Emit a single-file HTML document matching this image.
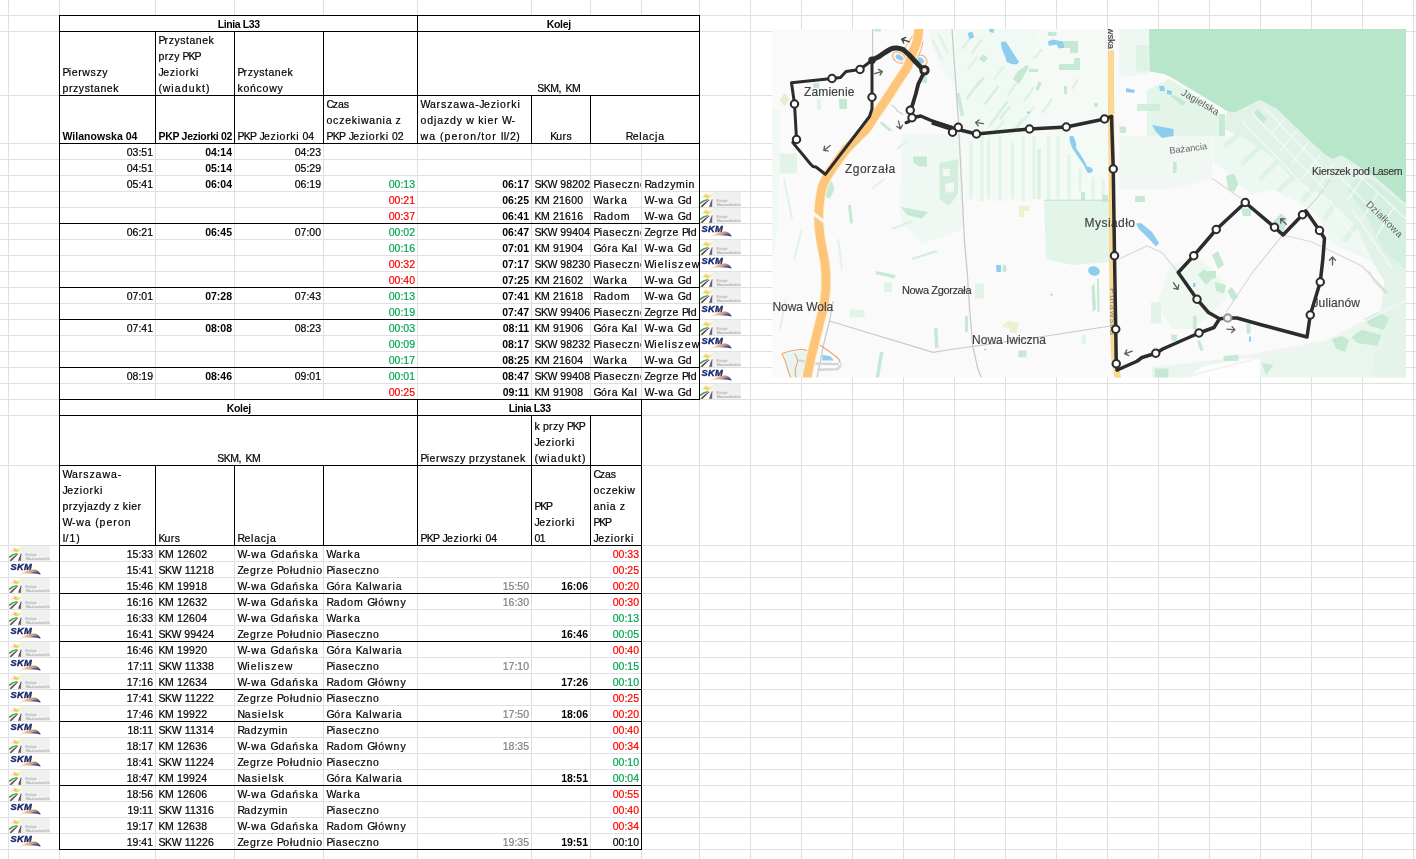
<!DOCTYPE html>
<html lang="pl"><head><meta charset="utf-8"><title>L33</title>
<style>
html,body{margin:0;padding:0;background:#fff}
body{width:1416px;height:859px;position:relative;overflow:hidden;font-family:"Liberation Sans",sans-serif;font-size:10.5px;line-height:16px;color:#000}
i{position:absolute;display:block}
.c{position:absolute;display:flex;align-items:flex-end;white-space:nowrap;box-sizing:border-box;padding:0 2px 0 2.5px}
.c span{display:block;margin-bottom:-1px}
.al{justify-content:flex-start;text-align:left}
.ar{justify-content:flex-end;text-align:right}
.ac{justify-content:center;text-align:center}
.clip{overflow:hidden}
.c{-webkit-text-stroke:0.2px}
.b{font-weight:bold;-webkit-text-stroke:0}
.g{color:#00a651}
.r{color:#f00}
.gr{color:#808080}
u{text-decoration:none;white-space:pre}
.ic{position:absolute}
#map{position:absolute;left:772px;top:29px}
#w{position:absolute;left:0;top:0;width:1416px;height:859px;overflow:hidden;will-change:transform;transform:translateZ(0);background:#fff}
</style></head><body><div id="w">
<svg width="0" height="0" style="position:absolute">
<defs>
<linearGradient id="skg" x1="0" y1="0" x2="1" y2="0"><stop offset="0" stop-color="#fbe3d2"/><stop offset="0.45" stop-color="#f2a868"/><stop offset="0.72" stop-color="#c98a74"/><stop offset="1" stop-color="#26357e"/></linearGradient>
<linearGradient id="skb" x1="0" y1="0" x2="1" y2="0"><stop offset="0" stop-color="#c9cde6" stop-opacity="0.5"/><stop offset="0.5" stop-color="#5b64a3"/><stop offset="1" stop-color="#1d2a72"/></linearGradient>
<symbol id="km" viewBox="0 0 46 15" overflow="visible">
<rect x="12.5" y="0" width="28.5" height="15" fill="#f0f0f0"/>
<rect x="10.5" y="0" width="2" height="15" fill="#f7f7f7"/>
<g fill="#f1d548">
<path d="M6.4,4.6 L5,0.2 L7.2,3.2 Z"/><path d="M6.8,4.4 L13.8,2.2 L8.2,5.6 Z"/><path d="M6,4.8 L9.6,0.8 L8,4.6 Z"/><path d="M6.5,5.2 L11.6,5.4 L7,6.4 Z"/>
<circle cx="6.6" cy="4.6" r="1.5"/>
</g>
<g fill="#efb465"><path d="M6,4.6 L0.8,5.9 L5.4,3.6 Z"/><path d="M6.2,4.2 L2.4,1.8 L6.9,3.4 Z"/></g>
<path d="M-0.2,10.9 Q3,7.9 8.2,7.5 Q4,9 0.6,11.6 Z" fill="#2f9e48" stroke="#2f9e48" stroke-width="0.7" stroke-linejoin="round"/>
<path d="M0.8,14.6 Q5,10 9.2,7.9 Q6,11 2.4,14.7 Z" fill="#4d3f3f" stroke="#4d3f3f" stroke-width="0.5" stroke-linejoin="round"/>
<path d="M9.4,14.6 Q10.6,10.6 12.2,7.5 Q11.8,11 11.8,14.6 Z" fill="#5a5a5a" stroke="#5a5a5a" stroke-width="0.5" stroke-linejoin="round"/>
<g fill="#adadad" font-family="Liberation Sans, sans-serif" font-size="3.3px" font-weight="bold">
<text x="16.6" y="10.3" textLength="11" lengthAdjust="spacingAndGlyphs">Koleje</text>
<text x="16.8" y="14.3" textLength="24" lengthAdjust="spacingAndGlyphs">Mazowieckie</text>
</g>
</symbol>
<symbol id="skm" viewBox="0 0 46 15" overflow="visible">
<text x="1.4" y="7.9" font-family="Liberation Sans, sans-serif" font-weight="bold" font-style="italic" font-size="9.3px" fill="#18266e" stroke="#18266e" stroke-width="0.35" textLength="21.4" lengthAdjust="spacing">SKM</text>
<path d="M10.4,12.7 Q20,6.6 26,7.5 Q30,8.6 31.8,12.5 Q27,9.9 21.5,10.6 Q16,11.3 10.4,12.7 Z" fill="url(#skg)"/>
<path d="M16,11.7 Q22,10 26,10.1 Q29.6,10.5 31.8,12.5 Q28,11.6 24,11.6 Q20,11.5 16,11.7 Z" fill="url(#skb)"/>
</symbol>
</defs>
</svg>

<i style="left:0px;top:15px;width:1416px;height:1px;background:#e0e0e0"></i><i style="left:0px;top:31px;width:1416px;height:1px;background:#e0e0e0"></i><i style="left:0px;top:95px;width:1416px;height:1px;background:#e0e0e0"></i><i style="left:0px;top:143px;width:1416px;height:1px;background:#e0e0e0"></i><i style="left:0px;top:159px;width:1416px;height:1px;background:#e0e0e0"></i><i style="left:0px;top:175px;width:1416px;height:1px;background:#e0e0e0"></i><i style="left:0px;top:191px;width:1416px;height:1px;background:#e0e0e0"></i><i style="left:0px;top:207px;width:1416px;height:1px;background:#e0e0e0"></i><i style="left:0px;top:223px;width:1416px;height:1px;background:#e0e0e0"></i><i style="left:0px;top:239px;width:1416px;height:1px;background:#e0e0e0"></i><i style="left:0px;top:255px;width:1416px;height:1px;background:#e0e0e0"></i><i style="left:0px;top:271px;width:1416px;height:1px;background:#e0e0e0"></i><i style="left:0px;top:287px;width:1416px;height:1px;background:#e0e0e0"></i><i style="left:0px;top:303px;width:1416px;height:1px;background:#e0e0e0"></i><i style="left:0px;top:319px;width:1416px;height:1px;background:#e0e0e0"></i><i style="left:0px;top:335px;width:1416px;height:1px;background:#e0e0e0"></i><i style="left:0px;top:351px;width:1416px;height:1px;background:#e0e0e0"></i><i style="left:0px;top:367px;width:1416px;height:1px;background:#e0e0e0"></i><i style="left:0px;top:383px;width:1416px;height:1px;background:#e0e0e0"></i><i style="left:0px;top:399px;width:1416px;height:1px;background:#e0e0e0"></i><i style="left:0px;top:415px;width:1416px;height:1px;background:#e0e0e0"></i><i style="left:0px;top:465px;width:1416px;height:1px;background:#e0e0e0"></i><i style="left:0px;top:545px;width:1416px;height:1px;background:#e0e0e0"></i><i style="left:0px;top:561px;width:1416px;height:1px;background:#e0e0e0"></i><i style="left:0px;top:577px;width:1416px;height:1px;background:#e0e0e0"></i><i style="left:0px;top:593px;width:1416px;height:1px;background:#e0e0e0"></i><i style="left:0px;top:609px;width:1416px;height:1px;background:#e0e0e0"></i><i style="left:0px;top:625px;width:1416px;height:1px;background:#e0e0e0"></i><i style="left:0px;top:641px;width:1416px;height:1px;background:#e0e0e0"></i><i style="left:0px;top:657px;width:1416px;height:1px;background:#e0e0e0"></i><i style="left:0px;top:673px;width:1416px;height:1px;background:#e0e0e0"></i><i style="left:0px;top:689px;width:1416px;height:1px;background:#e0e0e0"></i><i style="left:0px;top:705px;width:1416px;height:1px;background:#e0e0e0"></i><i style="left:0px;top:721px;width:1416px;height:1px;background:#e0e0e0"></i><i style="left:0px;top:737px;width:1416px;height:1px;background:#e0e0e0"></i><i style="left:0px;top:753px;width:1416px;height:1px;background:#e0e0e0"></i><i style="left:0px;top:769px;width:1416px;height:1px;background:#e0e0e0"></i><i style="left:0px;top:785px;width:1416px;height:1px;background:#e0e0e0"></i><i style="left:0px;top:801px;width:1416px;height:1px;background:#e0e0e0"></i><i style="left:0px;top:817px;width:1416px;height:1px;background:#e0e0e0"></i><i style="left:0px;top:833px;width:1416px;height:1px;background:#e0e0e0"></i><i style="left:0px;top:849px;width:1416px;height:1px;background:#e0e0e0"></i><i style="left:8px;top:0px;width:1px;height:859px;background:#e0e0e0"></i><i style="left:59px;top:0px;width:1px;height:859px;background:#e0e0e0"></i><i style="left:155px;top:0px;width:1px;height:859px;background:#e0e0e0"></i><i style="left:234px;top:0px;width:1px;height:859px;background:#e0e0e0"></i><i style="left:323px;top:0px;width:1px;height:859px;background:#e0e0e0"></i><i style="left:417px;top:0px;width:1px;height:859px;background:#e0e0e0"></i><i style="left:531px;top:0px;width:1px;height:859px;background:#e0e0e0"></i><i style="left:590px;top:0px;width:1px;height:859px;background:#e0e0e0"></i><i style="left:641px;top:0px;width:1px;height:859px;background:#e0e0e0"></i><i style="left:699px;top:0px;width:1px;height:859px;background:#e0e0e0"></i><i style="left:750px;top:0px;width:1px;height:859px;background:#e0e0e0"></i><i style="left:801px;top:0px;width:1px;height:859px;background:#e0e0e0"></i><i style="left:852px;top:0px;width:1px;height:859px;background:#e0e0e0"></i><i style="left:903px;top:0px;width:1px;height:859px;background:#e0e0e0"></i><i style="left:954px;top:0px;width:1px;height:859px;background:#e0e0e0"></i><i style="left:1005px;top:0px;width:1px;height:859px;background:#e0e0e0"></i><i style="left:1056px;top:0px;width:1px;height:859px;background:#e0e0e0"></i><i style="left:1107px;top:0px;width:1px;height:859px;background:#e0e0e0"></i><i style="left:1158px;top:0px;width:1px;height:859px;background:#e0e0e0"></i><i style="left:1209px;top:0px;width:1px;height:859px;background:#e0e0e0"></i><i style="left:1260px;top:0px;width:1px;height:859px;background:#e0e0e0"></i><i style="left:1311px;top:0px;width:1px;height:859px;background:#e0e0e0"></i><i style="left:1362px;top:0px;width:1px;height:859px;background:#e0e0e0"></i><i style="left:1413px;top:0px;width:1px;height:859px;background:#e0e0e0"></i><i style="left:60px;top:16px;width:357px;height:15px;background:#fff"></i><i style="left:418px;top:16px;width:281px;height:15px;background:#fff"></i><i style="left:418px;top:32px;width:281px;height:63px;background:#fff"></i><i style="left:591px;top:96px;width:108px;height:47px;background:#fff"></i><i style="left:60px;top:400px;width:357px;height:15px;background:#fff"></i><i style="left:418px;top:400px;width:223px;height:15px;background:#fff"></i><i style="left:60px;top:416px;width:357px;height:49px;background:#fff"></i><i style="left:59px;top:15px;width:641px;height:1px;background:#000"></i><i style="left:59px;top:31px;width:641px;height:1px;background:#000"></i><i style="left:59px;top:95px;width:641px;height:1px;background:#000"></i><i style="left:59px;top:143px;width:641px;height:1px;background:#000"></i><i style="left:59px;top:223px;width:641px;height:1px;background:#000"></i><i style="left:59px;top:287px;width:641px;height:1px;background:#000"></i><i style="left:59px;top:319px;width:641px;height:1px;background:#000"></i><i style="left:59px;top:367px;width:641px;height:1px;background:#000"></i><i style="left:59px;top:399px;width:641px;height:1px;background:#000"></i><i style="left:59px;top:15px;width:1px;height:385px;background:#000"></i><i style="left:699px;top:15px;width:1px;height:385px;background:#000"></i><i style="left:417px;top:15px;width:1px;height:129px;background:#000"></i><i style="left:155px;top:31px;width:1px;height:113px;background:#000"></i><i style="left:234px;top:31px;width:1px;height:113px;background:#000"></i><i style="left:323px;top:31px;width:1px;height:113px;background:#000"></i><i style="left:531px;top:95px;width:1px;height:49px;background:#000"></i><i style="left:590px;top:95px;width:1px;height:49px;background:#000"></i><i style="left:59px;top:399px;width:583px;height:1px;background:#000"></i><i style="left:59px;top:415px;width:583px;height:1px;background:#000"></i><i style="left:59px;top:465px;width:583px;height:1px;background:#000"></i><i style="left:59px;top:545px;width:583px;height:1px;background:#000"></i><i style="left:59px;top:593px;width:583px;height:1px;background:#000"></i><i style="left:59px;top:641px;width:583px;height:1px;background:#000"></i><i style="left:59px;top:689px;width:583px;height:1px;background:#000"></i><i style="left:59px;top:721px;width:583px;height:1px;background:#000"></i><i style="left:59px;top:785px;width:583px;height:1px;background:#000"></i><i style="left:59px;top:849px;width:583px;height:1px;background:#000"></i><i style="left:59px;top:399px;width:1px;height:451px;background:#000"></i><i style="left:641px;top:399px;width:1px;height:451px;background:#000"></i><i style="left:417px;top:399px;width:1px;height:147px;background:#000"></i><i style="left:531px;top:415px;width:1px;height:131px;background:#000"></i><i style="left:590px;top:415px;width:1px;height:131px;background:#000"></i><i style="left:155px;top:465px;width:1px;height:81px;background:#000"></i><i style="left:234px;top:465px;width:1px;height:81px;background:#000"></i><i style="left:323px;top:465px;width:1px;height:81px;background:#000"></i><div class="c ac b" style="left:60px;top:16px;width:357px;height:15px;"><span><u style="letter-spacing:-0.41px">Linia L33</u></span></div><div class="c ac b" style="left:418px;top:16px;width:281px;height:15px;"><span><u style="letter-spacing:-0.33px">Kolej</u></span></div><div class="c al" style="left:60px;top:32px;width:95px;height:63px;"><span><u style="letter-spacing:-0.80px">P</u><u style="letter-spacing:0.64px">ierwszy</u><br><u style="letter-spacing:0.58px">przystanek</u></span></div><div class="c al" style="left:156px;top:32px;width:78px;height:63px;"><span><u style="letter-spacing:-0.90px">P</u><u style="letter-spacing:0.54px">rzystanek</u><br><u style="letter-spacing:0.35px">przy</u><u style="letter-spacing:-0.09px"> </u><u style="letter-spacing:-1.09px">PKP</u><br><u style="letter-spacing:-0.64px">J</u><u style="letter-spacing:0.80px">eziorki</u><br><u style="letter-spacing:0.67px">(</u><u style="letter-spacing:1.11px">wiadukt</u><u style="letter-spacing:0.67px">)</u></span></div><div class="c al" style="left:235px;top:32px;width:88px;height:63px;"><span><u style="letter-spacing:-0.90px">P</u><u style="letter-spacing:0.54px">rzystanek</u><br><u style="letter-spacing:0.73px">końcowy</u></span></div><div class="c ac" style="left:418px;top:32px;width:281px;height:63px;"><span><u style="letter-spacing:-0.46px">SKM</u><u style="letter-spacing:0.54px">, </u><u style="letter-spacing:-0.46px">KM</u></span></div><div class="c al b" style="left:60px;top:96px;width:95px;height:47px;"><span><u style="letter-spacing:0.03px">Wilanowska 04</u></span></div><div class="c al b" style="left:156px;top:96px;width:78px;height:47px;"><span><u style="letter-spacing:-0.30px">PKP Jeziorki 02</u></span></div><div class="c al" style="left:235px;top:96px;width:88px;height:47px;"><span><u style="letter-spacing:-0.73px">PKP</u><u style="letter-spacing:0.27px"> </u><u style="letter-spacing:-0.73px">J</u><u style="letter-spacing:0.71px">eziorki</u><u style="letter-spacing:0.27px"> </u><u style="letter-spacing:-0.12px">04</u></span></div><div class="c al" style="left:324px;top:96px;width:93px;height:47px;"><span><u style="letter-spacing:-1.40px">C</u><u style="letter-spacing:0.04px">zas</u><br><u style="letter-spacing:0.78px">oczekiwania</u><u style="letter-spacing:0.34px"> </u><u style="letter-spacing:0.78px">z</u><br><u style="letter-spacing:-0.70px">PKP</u><u style="letter-spacing:0.30px"> </u><u style="letter-spacing:-0.70px">J</u><u style="letter-spacing:0.74px">eziorki</u><u style="letter-spacing:0.30px"> </u><u style="letter-spacing:-0.09px">02</u></span></div><div class="c al" style="left:418px;top:96px;width:113px;height:47px;"><span><u style="letter-spacing:-0.54px">W</u><u style="letter-spacing:0.90px">arszawa</u><u style="letter-spacing:0.46px">-</u><u style="letter-spacing:-0.54px">J</u><u style="letter-spacing:0.90px">eziorki</u><br><u style="letter-spacing:0.89px">odjazdy</u><u style="letter-spacing:0.45px"> </u><u style="letter-spacing:0.89px">w</u><u style="letter-spacing:0.45px"> </u><u style="letter-spacing:0.89px">kier</u><u style="letter-spacing:0.45px"> </u><u style="letter-spacing:-0.55px">W</u><u style="letter-spacing:0.45px">-</u><br><u style="letter-spacing:1.23px">wa</u><u style="letter-spacing:0.79px"> (</u><u style="letter-spacing:1.23px">peron</u><u style="letter-spacing:0.79px">/</u><u style="letter-spacing:1.23px">tor</u><u style="letter-spacing:0.79px"> </u><u style="letter-spacing:-0.21px">II</u><u style="letter-spacing:0.79px">/</u><u style="letter-spacing:0.40px">2</u><u style="letter-spacing:0.79px">)</u></span></div><div class="c ac" style="left:532px;top:96px;width:58px;height:47px;"><span><u style="letter-spacing:-0.96px">K</u><u style="letter-spacing:0.48px">urs</u></span></div><div class="c ac" style="left:591px;top:96px;width:108px;height:47px;"><span><u style="letter-spacing:-0.66px">R</u><u style="letter-spacing:0.78px">elacja</u></span></div><div class="c ar" style="left:60px;top:144px;width:95px;height:15px;"><span>03:51</span></div><div class="c ar b" style="left:156px;top:144px;width:78px;height:15px;"><span>04:14</span></div><div class="c ar" style="left:235px;top:144px;width:88px;height:15px;"><span>04:23</span></div><div class="c ar" style="left:60px;top:160px;width:95px;height:15px;"><span>04:51</span></div><div class="c ar b" style="left:156px;top:160px;width:78px;height:15px;"><span>05:14</span></div><div class="c ar" style="left:235px;top:160px;width:88px;height:15px;"><span>05:29</span></div><div class="c ar" style="left:60px;top:176px;width:95px;height:15px;"><span>05:41</span></div><div class="c ar b" style="left:156px;top:176px;width:78px;height:15px;"><span>06:04</span></div><div class="c ar" style="left:235px;top:176px;width:88px;height:15px;"><span>06:19</span></div><div class="c ar g" style="left:324px;top:176px;width:93px;height:15px;"><span>00:13</span></div><div class="c ar b" style="left:418px;top:176px;width:113px;height:15px;"><span>06:17</span></div><div class="c al  clip" style="left:532px;top:176px;width:58px;height:15px;"><span><u style="letter-spacing:-0.50px">SKW</u><u style="letter-spacing:0.50px"> </u><u style="letter-spacing:0.11px">98202</u></span></div><div class="c al  clip" style="left:591px;top:176px;width:50px;height:15px;"><span><u style="letter-spacing:-0.77px">P</u><u style="letter-spacing:0.67px">iaseczno</u></span></div><div class="c al  clip" style="left:642px;top:176px;width:57px;height:15px;"><span><u style="letter-spacing:-0.80px">R</u><u style="letter-spacing:0.64px">adzymin</u></span></div><div class="c ar r" style="left:324px;top:192px;width:93px;height:15px;"><span>00:21</span></div><div class="c ar b" style="left:418px;top:192px;width:113px;height:15px;"><span>06:25</span></div><div class="c al  clip" style="left:532px;top:192px;width:58px;height:15px;"><span><u style="letter-spacing:-0.40px">KM</u><u style="letter-spacing:0.60px"> </u><u style="letter-spacing:0.21px">21600</u></span></div><div class="c al  clip" style="left:591px;top:192px;width:50px;height:15px;"><span><u style="letter-spacing:-0.35px">W</u><u style="letter-spacing:1.09px">arka</u></span></div><div class="c al  clip" style="left:642px;top:192px;width:57px;height:15px;"><span><u style="letter-spacing:-0.27px">W</u><u style="letter-spacing:0.73px">-</u><u style="letter-spacing:1.17px">wa</u><u style="letter-spacing:0.73px"> </u><u style="letter-spacing:-0.27px">G</u><u style="letter-spacing:1.17px">d</u></span></div><div class="c ar r" style="left:324px;top:208px;width:93px;height:15px;"><span>00:37</span></div><div class="c ar b" style="left:418px;top:208px;width:113px;height:15px;"><span>06:41</span></div><div class="c al  clip" style="left:532px;top:208px;width:58px;height:15px;"><span><u style="letter-spacing:-0.40px">KM</u><u style="letter-spacing:0.60px"> </u><u style="letter-spacing:0.21px">21616</u></span></div><div class="c al  clip" style="left:591px;top:208px;width:50px;height:15px;"><span><u style="letter-spacing:-0.55px">R</u><u style="letter-spacing:0.89px">adom</u></span></div><div class="c al  clip" style="left:642px;top:208px;width:57px;height:15px;"><span><u style="letter-spacing:-0.27px">W</u><u style="letter-spacing:0.73px">-</u><u style="letter-spacing:1.17px">wa</u><u style="letter-spacing:0.73px"> </u><u style="letter-spacing:-0.27px">G</u><u style="letter-spacing:1.17px">d</u></span></div><div class="c ar" style="left:60px;top:224px;width:95px;height:15px;"><span>06:21</span></div><div class="c ar b" style="left:156px;top:224px;width:78px;height:15px;"><span>06:45</span></div><div class="c ar" style="left:235px;top:224px;width:88px;height:15px;"><span>07:00</span></div><div class="c ar g" style="left:324px;top:224px;width:93px;height:15px;"><span>00:02</span></div><div class="c ar b" style="left:418px;top:224px;width:113px;height:15px;"><span>06:47</span></div><div class="c al  clip" style="left:532px;top:224px;width:58px;height:15px;"><span><u style="letter-spacing:-0.50px">SKW</u><u style="letter-spacing:0.50px"> </u><u style="letter-spacing:0.11px">99404</u></span></div><div class="c al  clip" style="left:591px;top:224px;width:50px;height:15px;"><span><u style="letter-spacing:-0.77px">P</u><u style="letter-spacing:0.67px">iaseczno</u></span></div><div class="c al  clip" style="left:642px;top:224px;width:57px;height:15px;"><span><u style="letter-spacing:-0.92px">Z</u><u style="letter-spacing:0.52px">egrze</u><u style="letter-spacing:0.08px"> </u><u style="letter-spacing:-0.92px">P</u><u style="letter-spacing:0.52px">łd</u></span></div><div class="c ar g" style="left:324px;top:240px;width:93px;height:15px;"><span>00:16</span></div><div class="c ar b" style="left:418px;top:240px;width:113px;height:15px;"><span>07:01</span></div><div class="c al  clip" style="left:532px;top:240px;width:58px;height:15px;"><span><u style="letter-spacing:-0.40px">KM</u><u style="letter-spacing:0.60px"> </u><u style="letter-spacing:0.21px">91904</u></span></div><div class="c al  clip" style="left:591px;top:240px;width:50px;height:15px;"><span><u style="letter-spacing:-0.71px">G</u><u style="letter-spacing:0.73px">óra</u><u style="letter-spacing:0.29px"> </u><u style="letter-spacing:-0.71px">K</u><u style="letter-spacing:0.73px">al</u></span></div><div class="c al  clip" style="left:642px;top:240px;width:57px;height:15px;"><span><u style="letter-spacing:-0.27px">W</u><u style="letter-spacing:0.73px">-</u><u style="letter-spacing:1.17px">wa</u><u style="letter-spacing:0.73px"> </u><u style="letter-spacing:-0.27px">G</u><u style="letter-spacing:1.17px">d</u></span></div><div class="c ar r" style="left:324px;top:256px;width:93px;height:15px;"><span>00:32</span></div><div class="c ar b" style="left:418px;top:256px;width:113px;height:15px;"><span>07:17</span></div><div class="c al  clip" style="left:532px;top:256px;width:58px;height:15px;"><span><u style="letter-spacing:-0.50px">SKW</u><u style="letter-spacing:0.50px"> </u><u style="letter-spacing:0.11px">98230</u></span></div><div class="c al  clip" style="left:591px;top:256px;width:50px;height:15px;"><span><u style="letter-spacing:-0.77px">P</u><u style="letter-spacing:0.67px">iaseczno</u></span></div><div class="c al  clip" style="left:642px;top:256px;width:57px;height:15px;"><span><u style="letter-spacing:-0.24px">W</u><u style="letter-spacing:1.20px">ieliszew</u></span></div><div class="c ar r" style="left:324px;top:272px;width:93px;height:15px;"><span>00:40</span></div><div class="c ar b" style="left:418px;top:272px;width:113px;height:15px;"><span>07:25</span></div><div class="c al  clip" style="left:532px;top:272px;width:58px;height:15px;"><span><u style="letter-spacing:-0.40px">KM</u><u style="letter-spacing:0.60px"> </u><u style="letter-spacing:0.21px">21602</u></span></div><div class="c al  clip" style="left:591px;top:272px;width:50px;height:15px;"><span><u style="letter-spacing:-0.35px">W</u><u style="letter-spacing:1.09px">arka</u></span></div><div class="c al  clip" style="left:642px;top:272px;width:57px;height:15px;"><span><u style="letter-spacing:-0.27px">W</u><u style="letter-spacing:0.73px">-</u><u style="letter-spacing:1.17px">wa</u><u style="letter-spacing:0.73px"> </u><u style="letter-spacing:-0.27px">G</u><u style="letter-spacing:1.17px">d</u></span></div><div class="c ar" style="left:60px;top:288px;width:95px;height:15px;"><span>07:01</span></div><div class="c ar b" style="left:156px;top:288px;width:78px;height:15px;"><span>07:28</span></div><div class="c ar" style="left:235px;top:288px;width:88px;height:15px;"><span>07:43</span></div><div class="c ar g" style="left:324px;top:288px;width:93px;height:15px;"><span>00:13</span></div><div class="c ar b" style="left:418px;top:288px;width:113px;height:15px;"><span>07:41</span></div><div class="c al  clip" style="left:532px;top:288px;width:58px;height:15px;"><span><u style="letter-spacing:-0.40px">KM</u><u style="letter-spacing:0.60px"> </u><u style="letter-spacing:0.21px">21618</u></span></div><div class="c al  clip" style="left:591px;top:288px;width:50px;height:15px;"><span><u style="letter-spacing:-0.55px">R</u><u style="letter-spacing:0.89px">adom</u></span></div><div class="c al  clip" style="left:642px;top:288px;width:57px;height:15px;"><span><u style="letter-spacing:-0.27px">W</u><u style="letter-spacing:0.73px">-</u><u style="letter-spacing:1.17px">wa</u><u style="letter-spacing:0.73px"> </u><u style="letter-spacing:-0.27px">G</u><u style="letter-spacing:1.17px">d</u></span></div><div class="c ar g" style="left:324px;top:304px;width:93px;height:15px;"><span>00:19</span></div><div class="c ar b" style="left:418px;top:304px;width:113px;height:15px;"><span>07:47</span></div><div class="c al  clip" style="left:532px;top:304px;width:58px;height:15px;"><span><u style="letter-spacing:-0.50px">SKW</u><u style="letter-spacing:0.50px"> </u><u style="letter-spacing:0.11px">99406</u></span></div><div class="c al  clip" style="left:591px;top:304px;width:50px;height:15px;"><span><u style="letter-spacing:-0.77px">P</u><u style="letter-spacing:0.67px">iaseczno</u></span></div><div class="c al  clip" style="left:642px;top:304px;width:57px;height:15px;"><span><u style="letter-spacing:-0.92px">Z</u><u style="letter-spacing:0.52px">egrze</u><u style="letter-spacing:0.08px"> </u><u style="letter-spacing:-0.92px">P</u><u style="letter-spacing:0.52px">łd</u></span></div><div class="c ar" style="left:60px;top:320px;width:95px;height:15px;"><span>07:41</span></div><div class="c ar b" style="left:156px;top:320px;width:78px;height:15px;"><span>08:08</span></div><div class="c ar" style="left:235px;top:320px;width:88px;height:15px;"><span>08:23</span></div><div class="c ar g" style="left:324px;top:320px;width:93px;height:15px;"><span>00:03</span></div><div class="c ar b" style="left:418px;top:320px;width:113px;height:15px;"><span>08:11</span></div><div class="c al  clip" style="left:532px;top:320px;width:58px;height:15px;"><span><u style="letter-spacing:-0.40px">KM</u><u style="letter-spacing:0.60px"> </u><u style="letter-spacing:0.21px">91906</u></span></div><div class="c al  clip" style="left:591px;top:320px;width:50px;height:15px;"><span><u style="letter-spacing:-0.71px">G</u><u style="letter-spacing:0.73px">óra</u><u style="letter-spacing:0.29px"> </u><u style="letter-spacing:-0.71px">K</u><u style="letter-spacing:0.73px">al</u></span></div><div class="c al  clip" style="left:642px;top:320px;width:57px;height:15px;"><span><u style="letter-spacing:-0.27px">W</u><u style="letter-spacing:0.73px">-</u><u style="letter-spacing:1.17px">wa</u><u style="letter-spacing:0.73px"> </u><u style="letter-spacing:-0.27px">G</u><u style="letter-spacing:1.17px">d</u></span></div><div class="c ar g" style="left:324px;top:336px;width:93px;height:15px;"><span>00:09</span></div><div class="c ar b" style="left:418px;top:336px;width:113px;height:15px;"><span>08:17</span></div><div class="c al  clip" style="left:532px;top:336px;width:58px;height:15px;"><span><u style="letter-spacing:-0.50px">SKW</u><u style="letter-spacing:0.50px"> </u><u style="letter-spacing:0.11px">98232</u></span></div><div class="c al  clip" style="left:591px;top:336px;width:50px;height:15px;"><span><u style="letter-spacing:-0.77px">P</u><u style="letter-spacing:0.67px">iaseczno</u></span></div><div class="c al  clip" style="left:642px;top:336px;width:57px;height:15px;"><span><u style="letter-spacing:-0.24px">W</u><u style="letter-spacing:1.20px">ieliszew</u></span></div><div class="c ar g" style="left:324px;top:352px;width:93px;height:15px;"><span>00:17</span></div><div class="c ar b" style="left:418px;top:352px;width:113px;height:15px;"><span>08:25</span></div><div class="c al  clip" style="left:532px;top:352px;width:58px;height:15px;"><span><u style="letter-spacing:-0.40px">KM</u><u style="letter-spacing:0.60px"> </u><u style="letter-spacing:0.21px">21604</u></span></div><div class="c al  clip" style="left:591px;top:352px;width:50px;height:15px;"><span><u style="letter-spacing:-0.35px">W</u><u style="letter-spacing:1.09px">arka</u></span></div><div class="c al  clip" style="left:642px;top:352px;width:57px;height:15px;"><span><u style="letter-spacing:-0.27px">W</u><u style="letter-spacing:0.73px">-</u><u style="letter-spacing:1.17px">wa</u><u style="letter-spacing:0.73px"> </u><u style="letter-spacing:-0.27px">G</u><u style="letter-spacing:1.17px">d</u></span></div><div class="c ar" style="left:60px;top:368px;width:95px;height:15px;"><span>08:19</span></div><div class="c ar b" style="left:156px;top:368px;width:78px;height:15px;"><span>08:46</span></div><div class="c ar" style="left:235px;top:368px;width:88px;height:15px;"><span>09:01</span></div><div class="c ar g" style="left:324px;top:368px;width:93px;height:15px;"><span>00:01</span></div><div class="c ar b" style="left:418px;top:368px;width:113px;height:15px;"><span>08:47</span></div><div class="c al  clip" style="left:532px;top:368px;width:58px;height:15px;"><span><u style="letter-spacing:-0.50px">SKW</u><u style="letter-spacing:0.50px"> </u><u style="letter-spacing:0.11px">99408</u></span></div><div class="c al  clip" style="left:591px;top:368px;width:50px;height:15px;"><span><u style="letter-spacing:-0.77px">P</u><u style="letter-spacing:0.67px">iaseczno</u></span></div><div class="c al  clip" style="left:642px;top:368px;width:57px;height:15px;"><span><u style="letter-spacing:-0.92px">Z</u><u style="letter-spacing:0.52px">egrze</u><u style="letter-spacing:0.08px"> </u><u style="letter-spacing:-0.92px">P</u><u style="letter-spacing:0.52px">łd</u></span></div><div class="c ar r" style="left:324px;top:384px;width:93px;height:15px;"><span>00:25</span></div><div class="c ar b" style="left:418px;top:384px;width:113px;height:15px;"><span>09:11</span></div><div class="c al  clip" style="left:532px;top:384px;width:58px;height:15px;"><span><u style="letter-spacing:-0.40px">KM</u><u style="letter-spacing:0.60px"> </u><u style="letter-spacing:0.21px">91908</u></span></div><div class="c al  clip" style="left:591px;top:384px;width:50px;height:15px;"><span><u style="letter-spacing:-0.71px">G</u><u style="letter-spacing:0.73px">óra</u><u style="letter-spacing:0.29px"> </u><u style="letter-spacing:-0.71px">K</u><u style="letter-spacing:0.73px">al</u></span></div><div class="c al  clip" style="left:642px;top:384px;width:57px;height:15px;"><span><u style="letter-spacing:-0.27px">W</u><u style="letter-spacing:0.73px">-</u><u style="letter-spacing:1.17px">wa</u><u style="letter-spacing:0.73px"> </u><u style="letter-spacing:-0.27px">G</u><u style="letter-spacing:1.17px">d</u></span></div><div class="c ac b" style="left:60px;top:400px;width:357px;height:15px;"><span><u style="letter-spacing:-0.33px">Kolej</u></span></div><div class="c ac b" style="left:418px;top:400px;width:223px;height:15px;"><span><u style="letter-spacing:-0.41px">Linia L33</u></span></div><div class="c ac" style="left:60px;top:416px;width:357px;height:49px;"><span><u style="letter-spacing:-0.46px">SKM</u><u style="letter-spacing:0.54px">, </u><u style="letter-spacing:-0.46px">KM</u></span></div><div class="c al" style="left:418px;top:416px;width:113px;height:49px;"><span><u style="letter-spacing:-0.84px">P</u><u style="letter-spacing:0.60px">ierwszy</u><u style="letter-spacing:0.16px"> </u><u style="letter-spacing:0.60px">przystanek</u></span></div><div class="c al" style="left:532px;top:416px;width:58px;height:49px;"><span><u style="letter-spacing:0.34px">k</u><u style="letter-spacing:-0.10px"> </u><u style="letter-spacing:0.34px">przy</u><u style="letter-spacing:-0.10px"> </u><u style="letter-spacing:-1.10px">PKP</u><br><u style="letter-spacing:-0.64px">J</u><u style="letter-spacing:0.80px">eziorki</u><br><u style="letter-spacing:0.67px">(</u><u style="letter-spacing:1.11px">wiadukt</u><u style="letter-spacing:0.67px">)</u></span></div><div class="c al" style="left:60px;top:466px;width:95px;height:79px;"><span><u style="letter-spacing:-0.48px">W</u><u style="letter-spacing:0.96px">arszawa</u><u style="letter-spacing:0.52px">-</u><br><u style="letter-spacing:-0.64px">J</u><u style="letter-spacing:0.80px">eziorki</u><br><u style="letter-spacing:0.47px">przyjazdy</u><u style="letter-spacing:0.03px"> </u><u style="letter-spacing:0.47px">z</u><u style="letter-spacing:0.03px"> </u><u style="letter-spacing:0.47px">kier</u><br><u style="letter-spacing:-0.36px">W</u><u style="letter-spacing:0.64px">-</u><u style="letter-spacing:1.08px">wa</u><u style="letter-spacing:0.64px"> (</u><u style="letter-spacing:1.08px">peron</u><br><u style="letter-spacing:0.10px">I</u><u style="letter-spacing:1.10px">/</u><u style="letter-spacing:0.71px">1</u><u style="letter-spacing:1.10px">)</u></span></div><div class="c al" style="left:156px;top:466px;width:78px;height:79px;"><span><u style="letter-spacing:-0.96px">K</u><u style="letter-spacing:0.48px">urs</u></span></div><div class="c al" style="left:235px;top:466px;width:88px;height:79px;"><span><u style="letter-spacing:-0.66px">R</u><u style="letter-spacing:0.78px">elacja</u></span></div><div class="c al" style="left:418px;top:466px;width:113px;height:79px;"><span><u style="letter-spacing:-0.73px">PKP</u><u style="letter-spacing:0.27px"> </u><u style="letter-spacing:-0.73px">J</u><u style="letter-spacing:0.71px">eziorki</u><u style="letter-spacing:0.27px"> </u><u style="letter-spacing:-0.12px">04</u></span></div><div class="c al" style="left:532px;top:466px;width:58px;height:79px;"><span><u style="letter-spacing:-1.26px">PKP</u><br><u style="letter-spacing:-0.64px">J</u><u style="letter-spacing:0.80px">eziorki</u><br><u style="letter-spacing:-0.63px">01</u></span></div><div class="c al" style="left:591px;top:466px;width:50px;height:79px;"><span><u style="letter-spacing:-1.40px">C</u><u style="letter-spacing:0.04px">zas</u><br><u style="letter-spacing:0.67px">oczekiw</u><br><u style="letter-spacing:0.77px">ania</u><u style="letter-spacing:0.33px"> </u><u style="letter-spacing:0.77px">z</u><br><u style="letter-spacing:-1.26px">PKP</u><br><u style="letter-spacing:-0.64px">J</u><u style="letter-spacing:0.80px">eziorki</u></span></div><div class="c ar" style="left:60px;top:546px;width:95px;height:15px;"><span>15:33</span></div><div class="c al  clip" style="left:156px;top:546px;width:78px;height:15px;"><span><u style="letter-spacing:-0.40px">KM</u><u style="letter-spacing:0.60px"> </u><u style="letter-spacing:0.21px">12602</u></span></div><div class="c al  clip" style="left:235px;top:546px;width:88px;height:15px;"><span><u style="letter-spacing:-0.32px">W</u><u style="letter-spacing:0.68px">-</u><u style="letter-spacing:1.12px">wa</u><u style="letter-spacing:0.68px"> </u><u style="letter-spacing:-0.32px">G</u><u style="letter-spacing:1.12px">dańska</u></span></div><div class="c al  clip" style="left:324px;top:546px;width:93px;height:15px;"><span><u style="letter-spacing:-0.35px">W</u><u style="letter-spacing:1.09px">arka</u></span></div><div class="c ar r" style="left:591px;top:546px;width:50px;height:15px;"><span>00:33</span></div><div class="c ar" style="left:60px;top:562px;width:95px;height:15px;"><span>15:41</span></div><div class="c al  clip" style="left:156px;top:562px;width:78px;height:15px;"><span><u style="letter-spacing:-0.41px">SKW</u><u style="letter-spacing:0.59px"> </u><u style="letter-spacing:0.20px">11218</u></span></div><div class="c al  clip" style="left:235px;top:562px;width:88px;height:15px;"><span><u style="letter-spacing:-0.63px">Z</u><u style="letter-spacing:0.81px">egrze</u><u style="letter-spacing:0.37px"> </u><u style="letter-spacing:-0.63px">P</u><u style="letter-spacing:0.81px">ołudnio</u></span></div><div class="c al  clip" style="left:324px;top:562px;width:93px;height:15px;"><span><u style="letter-spacing:-0.77px">P</u><u style="letter-spacing:0.67px">iaseczno</u></span></div><div class="c ar r" style="left:591px;top:562px;width:50px;height:15px;"><span>00:25</span></div><div class="c ar" style="left:60px;top:578px;width:95px;height:15px;"><span>15:46</span></div><div class="c al  clip" style="left:156px;top:578px;width:78px;height:15px;"><span><u style="letter-spacing:-0.40px">KM</u><u style="letter-spacing:0.60px"> </u><u style="letter-spacing:0.21px">19918</u></span></div><div class="c al  clip" style="left:235px;top:578px;width:88px;height:15px;"><span><u style="letter-spacing:-0.32px">W</u><u style="letter-spacing:0.68px">-</u><u style="letter-spacing:1.12px">wa</u><u style="letter-spacing:0.68px"> </u><u style="letter-spacing:-0.32px">G</u><u style="letter-spacing:1.12px">dańska</u></span></div><div class="c al  clip" style="left:324px;top:578px;width:93px;height:15px;"><span><u style="letter-spacing:-0.45px">G</u><u style="letter-spacing:0.99px">óra</u><u style="letter-spacing:0.55px"> </u><u style="letter-spacing:-0.45px">K</u><u style="letter-spacing:0.99px">alwaria</u></span></div><div class="c ar gr" style="left:418px;top:578px;width:113px;height:15px;"><span>15:50</span></div><div class="c ar b" style="left:532px;top:578px;width:58px;height:15px;"><span>16:06</span></div><div class="c ar r" style="left:591px;top:578px;width:50px;height:15px;"><span>00:20</span></div><div class="c ar" style="left:60px;top:594px;width:95px;height:15px;"><span>16:16</span></div><div class="c al  clip" style="left:156px;top:594px;width:78px;height:15px;"><span><u style="letter-spacing:-0.40px">KM</u><u style="letter-spacing:0.60px"> </u><u style="letter-spacing:0.21px">12632</u></span></div><div class="c al  clip" style="left:235px;top:594px;width:88px;height:15px;"><span><u style="letter-spacing:-0.32px">W</u><u style="letter-spacing:0.68px">-</u><u style="letter-spacing:1.12px">wa</u><u style="letter-spacing:0.68px"> </u><u style="letter-spacing:-0.32px">G</u><u style="letter-spacing:1.12px">dańska</u></span></div><div class="c al  clip" style="left:324px;top:594px;width:93px;height:15px;"><span><u style="letter-spacing:-0.47px">R</u><u style="letter-spacing:0.97px">adom</u><u style="letter-spacing:0.53px"> </u><u style="letter-spacing:-0.47px">G</u><u style="letter-spacing:0.97px">łówny</u></span></div><div class="c ar gr" style="left:418px;top:594px;width:113px;height:15px;"><span>16:30</span></div><div class="c ar r" style="left:591px;top:594px;width:50px;height:15px;"><span>00:30</span></div><div class="c ar" style="left:60px;top:610px;width:95px;height:15px;"><span>16:33</span></div><div class="c al  clip" style="left:156px;top:610px;width:78px;height:15px;"><span><u style="letter-spacing:-0.40px">KM</u><u style="letter-spacing:0.60px"> </u><u style="letter-spacing:0.21px">12604</u></span></div><div class="c al  clip" style="left:235px;top:610px;width:88px;height:15px;"><span><u style="letter-spacing:-0.32px">W</u><u style="letter-spacing:0.68px">-</u><u style="letter-spacing:1.12px">wa</u><u style="letter-spacing:0.68px"> </u><u style="letter-spacing:-0.32px">G</u><u style="letter-spacing:1.12px">dańska</u></span></div><div class="c al  clip" style="left:324px;top:610px;width:93px;height:15px;"><span><u style="letter-spacing:-0.35px">W</u><u style="letter-spacing:1.09px">arka</u></span></div><div class="c ar g" style="left:591px;top:610px;width:50px;height:15px;"><span>00:13</span></div><div class="c ar" style="left:60px;top:626px;width:95px;height:15px;"><span>16:41</span></div><div class="c al  clip" style="left:156px;top:626px;width:78px;height:15px;"><span><u style="letter-spacing:-0.50px">SKW</u><u style="letter-spacing:0.50px"> </u><u style="letter-spacing:0.11px">99424</u></span></div><div class="c al  clip" style="left:235px;top:626px;width:88px;height:15px;"><span><u style="letter-spacing:-0.63px">Z</u><u style="letter-spacing:0.81px">egrze</u><u style="letter-spacing:0.37px"> </u><u style="letter-spacing:-0.63px">P</u><u style="letter-spacing:0.81px">ołudnio</u></span></div><div class="c al  clip" style="left:324px;top:626px;width:93px;height:15px;"><span><u style="letter-spacing:-0.77px">P</u><u style="letter-spacing:0.67px">iaseczno</u></span></div><div class="c ar b" style="left:532px;top:626px;width:58px;height:15px;"><span>16:46</span></div><div class="c ar g" style="left:591px;top:626px;width:50px;height:15px;"><span>00:05</span></div><div class="c ar" style="left:60px;top:642px;width:95px;height:15px;"><span>16:46</span></div><div class="c al  clip" style="left:156px;top:642px;width:78px;height:15px;"><span><u style="letter-spacing:-0.40px">KM</u><u style="letter-spacing:0.60px"> </u><u style="letter-spacing:0.21px">19920</u></span></div><div class="c al  clip" style="left:235px;top:642px;width:88px;height:15px;"><span><u style="letter-spacing:-0.32px">W</u><u style="letter-spacing:0.68px">-</u><u style="letter-spacing:1.12px">wa</u><u style="letter-spacing:0.68px"> </u><u style="letter-spacing:-0.32px">G</u><u style="letter-spacing:1.12px">dańska</u></span></div><div class="c al  clip" style="left:324px;top:642px;width:93px;height:15px;"><span><u style="letter-spacing:-0.45px">G</u><u style="letter-spacing:0.99px">óra</u><u style="letter-spacing:0.55px"> </u><u style="letter-spacing:-0.45px">K</u><u style="letter-spacing:0.99px">alwaria</u></span></div><div class="c ar r" style="left:591px;top:642px;width:50px;height:15px;"><span>00:40</span></div><div class="c ar" style="left:60px;top:658px;width:95px;height:15px;"><span>17:11</span></div><div class="c al  clip" style="left:156px;top:658px;width:78px;height:15px;"><span><u style="letter-spacing:-0.41px">SKW</u><u style="letter-spacing:0.59px"> </u><u style="letter-spacing:0.20px">11338</u></span></div><div class="c al  clip" style="left:235px;top:658px;width:88px;height:15px;"><span><u style="letter-spacing:-0.24px">W</u><u style="letter-spacing:1.20px">ieliszew</u></span></div><div class="c al  clip" style="left:324px;top:658px;width:93px;height:15px;"><span><u style="letter-spacing:-0.77px">P</u><u style="letter-spacing:0.67px">iaseczno</u></span></div><div class="c ar gr" style="left:418px;top:658px;width:113px;height:15px;"><span>17:10</span></div><div class="c ar g" style="left:591px;top:658px;width:50px;height:15px;"><span>00:15</span></div><div class="c ar" style="left:60px;top:674px;width:95px;height:15px;"><span>17:16</span></div><div class="c al  clip" style="left:156px;top:674px;width:78px;height:15px;"><span><u style="letter-spacing:-0.40px">KM</u><u style="letter-spacing:0.60px"> </u><u style="letter-spacing:0.21px">12634</u></span></div><div class="c al  clip" style="left:235px;top:674px;width:88px;height:15px;"><span><u style="letter-spacing:-0.32px">W</u><u style="letter-spacing:0.68px">-</u><u style="letter-spacing:1.12px">wa</u><u style="letter-spacing:0.68px"> </u><u style="letter-spacing:-0.32px">G</u><u style="letter-spacing:1.12px">dańska</u></span></div><div class="c al  clip" style="left:324px;top:674px;width:93px;height:15px;"><span><u style="letter-spacing:-0.47px">R</u><u style="letter-spacing:0.97px">adom</u><u style="letter-spacing:0.53px"> </u><u style="letter-spacing:-0.47px">G</u><u style="letter-spacing:0.97px">łówny</u></span></div><div class="c ar b" style="left:532px;top:674px;width:58px;height:15px;"><span>17:26</span></div><div class="c ar g" style="left:591px;top:674px;width:50px;height:15px;"><span>00:10</span></div><div class="c ar" style="left:60px;top:690px;width:95px;height:15px;"><span>17:41</span></div><div class="c al  clip" style="left:156px;top:690px;width:78px;height:15px;"><span><u style="letter-spacing:-0.41px">SKW</u><u style="letter-spacing:0.59px"> </u><u style="letter-spacing:0.20px">11222</u></span></div><div class="c al  clip" style="left:235px;top:690px;width:88px;height:15px;"><span><u style="letter-spacing:-0.63px">Z</u><u style="letter-spacing:0.81px">egrze</u><u style="letter-spacing:0.37px"> </u><u style="letter-spacing:-0.63px">P</u><u style="letter-spacing:0.81px">ołudnio</u></span></div><div class="c al  clip" style="left:324px;top:690px;width:93px;height:15px;"><span><u style="letter-spacing:-0.77px">P</u><u style="letter-spacing:0.67px">iaseczno</u></span></div><div class="c ar r" style="left:591px;top:690px;width:50px;height:15px;"><span>00:25</span></div><div class="c ar" style="left:60px;top:706px;width:95px;height:15px;"><span>17:46</span></div><div class="c al  clip" style="left:156px;top:706px;width:78px;height:15px;"><span><u style="letter-spacing:-0.40px">KM</u><u style="letter-spacing:0.60px"> </u><u style="letter-spacing:0.21px">19922</u></span></div><div class="c al  clip" style="left:235px;top:706px;width:88px;height:15px;"><span><u style="letter-spacing:-0.32px">N</u><u style="letter-spacing:1.12px">asielsk</u></span></div><div class="c al  clip" style="left:324px;top:706px;width:93px;height:15px;"><span><u style="letter-spacing:-0.45px">G</u><u style="letter-spacing:0.99px">óra</u><u style="letter-spacing:0.55px"> </u><u style="letter-spacing:-0.45px">K</u><u style="letter-spacing:0.99px">alwaria</u></span></div><div class="c ar gr" style="left:418px;top:706px;width:113px;height:15px;"><span>17:50</span></div><div class="c ar b" style="left:532px;top:706px;width:58px;height:15px;"><span>18:06</span></div><div class="c ar r" style="left:591px;top:706px;width:50px;height:15px;"><span>00:20</span></div><div class="c ar" style="left:60px;top:722px;width:95px;height:15px;"><span>18:11</span></div><div class="c al  clip" style="left:156px;top:722px;width:78px;height:15px;"><span><u style="letter-spacing:-0.41px">SKW</u><u style="letter-spacing:0.59px"> </u><u style="letter-spacing:0.20px">11314</u></span></div><div class="c al  clip" style="left:235px;top:722px;width:88px;height:15px;"><span><u style="letter-spacing:-0.80px">R</u><u style="letter-spacing:0.64px">adzymin</u></span></div><div class="c al  clip" style="left:324px;top:722px;width:93px;height:15px;"><span><u style="letter-spacing:-0.77px">P</u><u style="letter-spacing:0.67px">iaseczno</u></span></div><div class="c ar r" style="left:591px;top:722px;width:50px;height:15px;"><span>00:40</span></div><div class="c ar" style="left:60px;top:738px;width:95px;height:15px;"><span>18:17</span></div><div class="c al  clip" style="left:156px;top:738px;width:78px;height:15px;"><span><u style="letter-spacing:-0.40px">KM</u><u style="letter-spacing:0.60px"> </u><u style="letter-spacing:0.21px">12636</u></span></div><div class="c al  clip" style="left:235px;top:738px;width:88px;height:15px;"><span><u style="letter-spacing:-0.32px">W</u><u style="letter-spacing:0.68px">-</u><u style="letter-spacing:1.12px">wa</u><u style="letter-spacing:0.68px"> </u><u style="letter-spacing:-0.32px">G</u><u style="letter-spacing:1.12px">dańska</u></span></div><div class="c al  clip" style="left:324px;top:738px;width:93px;height:15px;"><span><u style="letter-spacing:-0.47px">R</u><u style="letter-spacing:0.97px">adom</u><u style="letter-spacing:0.53px"> </u><u style="letter-spacing:-0.47px">G</u><u style="letter-spacing:0.97px">łówny</u></span></div><div class="c ar gr" style="left:418px;top:738px;width:113px;height:15px;"><span>18:35</span></div><div class="c ar r" style="left:591px;top:738px;width:50px;height:15px;"><span>00:34</span></div><div class="c ar" style="left:60px;top:754px;width:95px;height:15px;"><span>18:41</span></div><div class="c al  clip" style="left:156px;top:754px;width:78px;height:15px;"><span><u style="letter-spacing:-0.41px">SKW</u><u style="letter-spacing:0.59px"> </u><u style="letter-spacing:0.20px">11224</u></span></div><div class="c al  clip" style="left:235px;top:754px;width:88px;height:15px;"><span><u style="letter-spacing:-0.63px">Z</u><u style="letter-spacing:0.81px">egrze</u><u style="letter-spacing:0.37px"> </u><u style="letter-spacing:-0.63px">P</u><u style="letter-spacing:0.81px">ołudnio</u></span></div><div class="c al  clip" style="left:324px;top:754px;width:93px;height:15px;"><span><u style="letter-spacing:-0.77px">P</u><u style="letter-spacing:0.67px">iaseczno</u></span></div><div class="c ar g" style="left:591px;top:754px;width:50px;height:15px;"><span>00:10</span></div><div class="c ar" style="left:60px;top:770px;width:95px;height:15px;"><span>18:47</span></div><div class="c al  clip" style="left:156px;top:770px;width:78px;height:15px;"><span><u style="letter-spacing:-0.40px">KM</u><u style="letter-spacing:0.60px"> </u><u style="letter-spacing:0.21px">19924</u></span></div><div class="c al  clip" style="left:235px;top:770px;width:88px;height:15px;"><span><u style="letter-spacing:-0.32px">N</u><u style="letter-spacing:1.12px">asielsk</u></span></div><div class="c al  clip" style="left:324px;top:770px;width:93px;height:15px;"><span><u style="letter-spacing:-0.45px">G</u><u style="letter-spacing:0.99px">óra</u><u style="letter-spacing:0.55px"> </u><u style="letter-spacing:-0.45px">K</u><u style="letter-spacing:0.99px">alwaria</u></span></div><div class="c ar b" style="left:532px;top:770px;width:58px;height:15px;"><span>18:51</span></div><div class="c ar g" style="left:591px;top:770px;width:50px;height:15px;"><span>00:04</span></div><div class="c ar" style="left:60px;top:786px;width:95px;height:15px;"><span>18:56</span></div><div class="c al  clip" style="left:156px;top:786px;width:78px;height:15px;"><span><u style="letter-spacing:-0.40px">KM</u><u style="letter-spacing:0.60px"> </u><u style="letter-spacing:0.21px">12606</u></span></div><div class="c al  clip" style="left:235px;top:786px;width:88px;height:15px;"><span><u style="letter-spacing:-0.32px">W</u><u style="letter-spacing:0.68px">-</u><u style="letter-spacing:1.12px">wa</u><u style="letter-spacing:0.68px"> </u><u style="letter-spacing:-0.32px">G</u><u style="letter-spacing:1.12px">dańska</u></span></div><div class="c al  clip" style="left:324px;top:786px;width:93px;height:15px;"><span><u style="letter-spacing:-0.35px">W</u><u style="letter-spacing:1.09px">arka</u></span></div><div class="c ar r" style="left:591px;top:786px;width:50px;height:15px;"><span>00:55</span></div><div class="c ar" style="left:60px;top:802px;width:95px;height:15px;"><span>19:11</span></div><div class="c al  clip" style="left:156px;top:802px;width:78px;height:15px;"><span><u style="letter-spacing:-0.41px">SKW</u><u style="letter-spacing:0.59px"> </u><u style="letter-spacing:0.20px">11316</u></span></div><div class="c al  clip" style="left:235px;top:802px;width:88px;height:15px;"><span><u style="letter-spacing:-0.80px">R</u><u style="letter-spacing:0.64px">adzymin</u></span></div><div class="c al  clip" style="left:324px;top:802px;width:93px;height:15px;"><span><u style="letter-spacing:-0.77px">P</u><u style="letter-spacing:0.67px">iaseczno</u></span></div><div class="c ar r" style="left:591px;top:802px;width:50px;height:15px;"><span>00:40</span></div><div class="c ar" style="left:60px;top:818px;width:95px;height:15px;"><span>19:17</span></div><div class="c al  clip" style="left:156px;top:818px;width:78px;height:15px;"><span><u style="letter-spacing:-0.40px">KM</u><u style="letter-spacing:0.60px"> </u><u style="letter-spacing:0.21px">12638</u></span></div><div class="c al  clip" style="left:235px;top:818px;width:88px;height:15px;"><span><u style="letter-spacing:-0.32px">W</u><u style="letter-spacing:0.68px">-</u><u style="letter-spacing:1.12px">wa</u><u style="letter-spacing:0.68px"> </u><u style="letter-spacing:-0.32px">G</u><u style="letter-spacing:1.12px">dańska</u></span></div><div class="c al  clip" style="left:324px;top:818px;width:93px;height:15px;"><span><u style="letter-spacing:-0.47px">R</u><u style="letter-spacing:0.97px">adom</u><u style="letter-spacing:0.53px"> </u><u style="letter-spacing:-0.47px">G</u><u style="letter-spacing:0.97px">łówny</u></span></div><div class="c ar r" style="left:591px;top:818px;width:50px;height:15px;"><span>00:34</span></div><div class="c ar" style="left:60px;top:834px;width:95px;height:15px;"><span>19:41</span></div><div class="c al  clip" style="left:156px;top:834px;width:78px;height:15px;"><span><u style="letter-spacing:-0.41px">SKW</u><u style="letter-spacing:0.59px"> </u><u style="letter-spacing:0.20px">11226</u></span></div><div class="c al  clip" style="left:235px;top:834px;width:88px;height:15px;"><span><u style="letter-spacing:-0.63px">Z</u><u style="letter-spacing:0.81px">egrze</u><u style="letter-spacing:0.37px"> </u><u style="letter-spacing:-0.63px">P</u><u style="letter-spacing:0.81px">ołudnio</u></span></div><div class="c al  clip" style="left:324px;top:834px;width:93px;height:15px;"><span><u style="letter-spacing:-0.77px">P</u><u style="letter-spacing:0.67px">iaseczno</u></span></div><div class="c ar gr" style="left:418px;top:834px;width:113px;height:15px;"><span>19:35</span></div><div class="c ar b" style="left:532px;top:834px;width:58px;height:15px;"><span>19:51</span></div><div class="c ar" style="left:591px;top:834px;width:50px;height:15px;"><span>00:10</span></div><svg class="ic" style="left:700.4px;top:192px" width="46" height="15" viewBox="0 0 46 15"><use href="#km"/></svg><svg class="ic" style="left:700.4px;top:208px" width="46" height="15" viewBox="0 0 46 15"><use href="#km"/></svg><svg class="ic" style="left:700.4px;top:224px" width="46" height="15" viewBox="0 0 46 15"><use href="#skm"/></svg><svg class="ic" style="left:700.4px;top:240px" width="46" height="15" viewBox="0 0 46 15"><use href="#km"/></svg><svg class="ic" style="left:700.4px;top:256px" width="46" height="15" viewBox="0 0 46 15"><use href="#skm"/></svg><svg class="ic" style="left:700.4px;top:272px" width="46" height="15" viewBox="0 0 46 15"><use href="#km"/></svg><svg class="ic" style="left:700.4px;top:288px" width="46" height="15" viewBox="0 0 46 15"><use href="#km"/></svg><svg class="ic" style="left:700.4px;top:304px" width="46" height="15" viewBox="0 0 46 15"><use href="#skm"/></svg><svg class="ic" style="left:700.4px;top:320px" width="46" height="15" viewBox="0 0 46 15"><use href="#km"/></svg><svg class="ic" style="left:700.4px;top:336px" width="46" height="15" viewBox="0 0 46 15"><use href="#skm"/></svg><svg class="ic" style="left:700.4px;top:352px" width="46" height="15" viewBox="0 0 46 15"><use href="#km"/></svg><svg class="ic" style="left:700.4px;top:368px" width="46" height="15" viewBox="0 0 46 15"><use href="#skm"/></svg><svg class="ic" style="left:700.4px;top:384px" width="46" height="15" viewBox="0 0 46 15"><use href="#km"/></svg><svg class="ic" style="left:9px;top:546px" width="46" height="15" viewBox="0 0 46 15"><use href="#km"/></svg><svg class="ic" style="left:9px;top:562px" width="46" height="15" viewBox="0 0 46 15"><use href="#skm"/></svg><svg class="ic" style="left:9px;top:578px" width="46" height="15" viewBox="0 0 46 15"><use href="#km"/></svg><svg class="ic" style="left:9px;top:594px" width="46" height="15" viewBox="0 0 46 15"><use href="#km"/></svg><svg class="ic" style="left:9px;top:610px" width="46" height="15" viewBox="0 0 46 15"><use href="#km"/></svg><svg class="ic" style="left:9px;top:626px" width="46" height="15" viewBox="0 0 46 15"><use href="#skm"/></svg><svg class="ic" style="left:9px;top:642px" width="46" height="15" viewBox="0 0 46 15"><use href="#km"/></svg><svg class="ic" style="left:9px;top:658px" width="46" height="15" viewBox="0 0 46 15"><use href="#skm"/></svg><svg class="ic" style="left:9px;top:674px" width="46" height="15" viewBox="0 0 46 15"><use href="#km"/></svg><svg class="ic" style="left:9px;top:690px" width="46" height="15" viewBox="0 0 46 15"><use href="#skm"/></svg><svg class="ic" style="left:9px;top:706px" width="46" height="15" viewBox="0 0 46 15"><use href="#km"/></svg><svg class="ic" style="left:9px;top:722px" width="46" height="15" viewBox="0 0 46 15"><use href="#skm"/></svg><svg class="ic" style="left:9px;top:738px" width="46" height="15" viewBox="0 0 46 15"><use href="#km"/></svg><svg class="ic" style="left:9px;top:754px" width="46" height="15" viewBox="0 0 46 15"><use href="#skm"/></svg><svg class="ic" style="left:9px;top:770px" width="46" height="15" viewBox="0 0 46 15"><use href="#km"/></svg><svg class="ic" style="left:9px;top:786px" width="46" height="15" viewBox="0 0 46 15"><use href="#km"/></svg><svg class="ic" style="left:9px;top:802px" width="46" height="15" viewBox="0 0 46 15"><use href="#skm"/></svg><svg class="ic" style="left:9px;top:818px" width="46" height="15" viewBox="0 0 46 15"><use href="#km"/></svg><svg class="ic" style="left:9px;top:834px" width="46" height="15" viewBox="0 0 46 15"><use href="#skm"/></svg>
<svg id="map" width="634" height="348.5" viewBox="0 0 634 348.5" font-family="Liberation Sans, sans-serif">
<defs><clipPath id="mc"><rect x="0" y="0" width="634" height="348.5"/></clipPath></defs>
<g clip-path="url(#mc)">
<rect width="634" height="348.5" fill="#f9faf9"/>
<!-- pale field regions -->
<g fill="#f1f9f4">
<path d="M158,0 L270,0 L262,108 L188,108 L184,60 L170,40 L160,18 Z"/>
<path d="M0,80 L8,80 L6,200 L0,230 Z"/>
</g>
<path d="M192,107 L336,107 L336,172 L193,172 Z" fill="#f4faf6"/>
<path d="M262,0 L336,0 L336,108 L258,108 Z" fill="#f6faf7"/>
<path d="M272,172 L337,172 L337,233 L300,236 L274,230 Z" fill="#e3f4e8"/>
<path d="M272,171.3 L337,171.3" stroke="#c9ebd6" stroke-width="1.4"/>
<path d="M130,105 L190,105 L192,200 L150,215 L128,190 Z" fill="#eff8f2"/>
<path d="M347,0 L377,0 L377,45 L347,48 Z" fill="#eef7f1"/>
<path d="M364,16 L376.5,16 L376.5,42.5 L364,42.5 Z" fill="#dff2e6"/>
<path d="M375,61 L398,50 L416,62 L440,76 L447,85 L447,107 L375,107 Z" fill="#e3f5e9"/>
<path d="M347,107 L440,107 L440,150 L400,160 L347,160 Z" fill="#f1f8f3"/>
<!-- band below forest -->
<path d="M455,82 L462.5,83.75 L487.5,70.75 L505,80 L540,113.75 L552.5,125 L560,130 L570,126.5 L602.5,147.5 L634,175 L634,262 L618,262 L600,232 L585,200 L560,172 L540,160 L520,150 L500,128 L470,108 L452,100 Z" fill="#e1f3e8"/>
<path d="M600,150 L634,178 L634,240 L612,222 L596,190 L575,160 L585,150 Z" fill="#d4efdf"/>
<path d="M441,107 L470,108 L500,128 L520,150 L540,160 L560,172 L585,200 L600,232 L560,215 L545,185 L520,170 L500,160 L480,166 L462,150 L441,132 Z" fill="#eef8f2"/>
<g stroke="#dff2e6" stroke-width="5" fill="none"><path d="M452,118 L468,104"/><path d="M470,135 L492,114"/><path d="M488,150 L510,128"/><path d="M506,162 L528,142"/><path d="M530,172 L548,152"/><path d="M552,190 L566,172"/><path d="M572,212 L586,194"/></g>
<!-- bottom-right pale -->
<path d="M380,349 L380,338 L410,335 L467,328 L554,312 L634,271 L634,349 Z" fill="#e9f6ed"/>
<path d="M614,242 L634,242 L634,349 L600,349 L606,300 Z" fill="#e4f4ea"/>
<path d="M414,349 L430,338 L470,329.5 L488,329.5 L488,349 Z" fill="#fdfdfd"/>
<path d="M398,236 L425,226 L450,250 L455,268 L440,285 L420,300 L400,300 L385,275 Z" fill="#eef8f1"/>
<!-- diagonal field stripes -->
<g stroke="#d6efdf" stroke-width="2.6" fill="none">
<path d="M194.5,70 L208,51.5"/><path d="M212.5,75.5 L226.5,57"/><path d="M217,97.5 L235.5,72.5"/><path d="M186,64 L190.5,87" stroke-width="3.5" stroke="#c9ebd6"/>
<path d="M203,60 L212,48"/><path d="M228,90 L238,77"/><path d="M245,100 L262,78" stroke="#e0f3e7"/><path d="M196,40 L206,27" stroke="#e0f3e7"/><path d="M222,50 L232,37" stroke="#e0f3e7"/>
<path d="M160,10 L170,30" stroke="#e0f3e7"/><path d="M166,4 L176,24" stroke="#e0f3e7"/>
</g>
<g stroke="#dcf1e4" stroke-width="2.2" fill="none">
<path d="M190,20 L199,8"/><path d="M200,24 L210,10"/><path d="M236,66 L246,52"/><path d="M252,72 L262,58"/><path d="M270,84 L280,70"/><path d="M262,30 L270,20"/><path d="M300,60 L306,50"/><path d="M222,104 L232,92"/><path d="M240,104 L250,90"/>
<path d="M12,150 L20,190" stroke="#e3f3e9"/><path d="M22,230 L30,200" stroke="#e3f3e9"/><path d="M8,300 L14,270" stroke="#e3f3e9"/><path d="M66,210 L70,240" stroke="#e3f3e9"/>
<path d="M125,120 L135,112"/><path d="M120,200 L140,192"/><path d="M140,230 L165,222" stroke="#d3eedd"/><path d="M100,160 L112,150" stroke="#e3f3e9"/>
</g>
<!-- vertical stripes -->
<g stroke="#e3f4e9" stroke-width="3.4" fill="none">
<path d="M199,112 V170"/><path d="M210,107 V172"/><path d="M216.5,110 V170"/><path d="M228,107 V172"/><path d="M240.5,112 V170"/><path d="M251,107 V172"/><path d="M262,107 V170"/><path d="M267,120 V170" stroke="#d9f0e2"/><path d="M276.5,107 V170"/><path d="M286,107 V170"/><path d="M297,125 V170"/><path d="M308,140 V162"/><path d="M321,148 V170"/><path d="M331,150 V166"/>
</g>
<!-- green patches -->
<g fill="#c6e9d4">
<path d="M66.9,70 L75,70 L75,80 L67.5,80 Z"/><path d="M41,54 L47.5,54 L47,59 L41.5,59 Z"/>
<path d="M102.5,0 L109,0 L109,2.5 L102.5,2.5 Z"/><path d="M150,47.5 L155,47.5 L155,54 L150.5,54 Z"/>
<path d="M107.5,94 L110,92.5 L120,101 L117.5,102.5 Z"/>
<path d="M141,127.6 L155,127.6 L155,137.6 L147,137.6 L141,133 Z"/>
<path d="M167.5,134 L177,132 L186,130 L186,165 L177,177 L167.5,170 Z" fill="#d3eedd"/><path d="M171,140 L178,140 L178,147 L171,147 Z M173,155 L182,153 L182,162 L174,164 Z" fill="#f2f9f4"/>
<path d="M128.75,178 L156,183 L150,189.5 L135,186 Z"/>
<path d="M55,154.5 L60,152 L62.5,160 L58,169.5 L54,168 Z"/>
<path d="M76,176 L79,176 L81,194.5 L78,194.5 Z"/>
<path d="M141,125 L152,125 L152,135 L141,135 Z" opacity="0"/>
<path d="M275.75,3 L284.5,3 L284.5,7 L275.75,7 Z"/>
<path d="M287,12 L306,12 L306,24 L298,24 L298,19 L287,19 Z"/>
<path d="M302,29 L308,29 L308,41 L287,41 L287,35 L302,35 Z"/>
<path d="M211,25.6 L216,29 L212,33.75 L207,30 Z"/>
<path d="M254.5,36 L257,38 L247,55 L240.75,50 L246,42 Z"/>
<path d="M257,40 L266,40 L266,43 L257,43 Z"/><path d="M263.5,60 L266.5,52.5 L270,54 L266,62 Z"/>
<path d="M292,57 L295,57 L295,65 L292,65 Z"/><path d="M322,74 L326,74 L326,78 L322,78 Z"/>
<path d="M347.6,97.5 L354,97.5 L354,104 L347.6,104 Z"/>
<path d="M309,163 L313,163 L313,171 L309,171 Z"/><path d="M330,166 L336,166 L336,173 L330,173 Z"/>
<path d="M365,75 L388,75 L388,82 L365,82 Z" fill="#d0eedb"/>
<path d="M398,67 L402,66 L414,73 L411,77 Z"/>
<path d="M447,85 L453,85 L453,107 L447,107 Z"/>
<path d="M481.5,84 L486,80 L495,90 L491,95 Z"/>
<path d="M363,167 L373,167 L373,173 L363,173 Z"/><path d="M401,133 L404.6,133 L404.6,144 L401,144 Z"/>
<path d="M454,147 L462,144.5 L466.5,155 L462,163 L456,160 Z"/>
<path d="M469,179.5 L479,179.5 L479,187 L471,187 Z"/>
<path d="M501.5,192 L509,184.5 L515,190 L511,204.5 L504,200 Z"/>
<path d="M103.75,242 L123.75,246 L122.5,249.5 L103.75,245 Z"/>
<path d="M162,299 L165.5,299 L166.5,319 L163,319 Z"/><path d="M108,323 L111.5,323 L107,349 L103.5,349 Z"/>
<path d="M246.4,321.4 L254.5,321.4 L254.5,328.25 L246.4,328.25 Z"/>
<path d="M319.5,257 L322.5,254 L324,280 L320.5,283 Z"/><path d="M325,250 L327,250 L327.5,283 L325.5,283 Z"/>
<path d="M193,287 L196,287 L196,303 L193,303 Z"/>
<path d="M434,242 L444,242 L444,249.5 L436,249.5 Z"/><path d="M442.75,253 L454,256 L452,264.5 L444,262 Z"/>
<path d="M421,287 L424.6,287 L424.6,300.75 L421,300.75 Z"/><path d="M425,312 L428,311 L431.5,321 L428.5,322 Z"/>
<path d="M399,305.75 L405,305.75 L405,312 L400,312 Z"/><path d="M451.5,327 L466.5,325.75 L466.5,332 L451.5,332 Z"/>
<path d="M474.6,294.5 L478.4,294.5 L478.4,304.5 L474.6,304.5 Z"/><path d="M490,334.5 L501.5,336 L494,345.75 Z"/>
<path d="M382.75,339.5 L396.5,339.5 L396.5,349 L382.75,349 Z"/>
<path d="M559.5,310 L570,307 L577,311 L573,323 L564.5,320 Z"/>
<path d="M579.5,308 L590,300.75 L609.5,306 L605,317 L585,314 Z"/>
<path d="M592,290 L606,283 L617,289 L612,300.75 L598,297 Z"/>
<path d="M426,246 L432,240 L440,250 L434,256 Z"/><path d="M440,226 L446,222 L452,236 L446,240 Z"/><path d="M455,262 L460,258 L466,268 L461,272 Z"/>
<path d="M177,129.5 L186,129.5 L186,167 L180,160 Z" opacity="0"/>
</g>
<g fill="#e2f3e8">
<path d="M77.5,280.75 L92.5,280.75 L92.5,288.25 L77.5,288.25 Z"/><path d="M112,253 L120,253 L120,263 L112,263 Z"/>
<path d="M203,254.5 L212,254.5 L212,269.5 L203,269.5 Z"/><path d="M309.5,306 L314,306 L314,314.5 L309.5,314.5 Z"/>
<path d="M379,273 L389,273 L389,294.5 L379,294.5 Z"/><path d="M7.5,124.5 L25,124.5 L25,144.5 L7.5,144.5 Z"/>
<path d="M45,70 L49,70 L49,81 L45,81 Z"/>
</g>
<!-- yellowish -->
<g fill="#eef0d0">
<path d="M12.5,64 L17.5,70.5 L12.5,77.5 L7.5,71 Z" fill="#e6edd3"/>
<path d="M247,177 L257,177 L257,182 L252,182 L252,188 L247,188 Z"/>
<path d="M236,292 L247,294 L244,304.5 L238,303 L237,299 L229.5,298 Z"/>
</g>

<g fill="#fdf3ea" stroke="#eeaa78" stroke-width="1">
<ellipse cx="127" cy="28.5" rx="7.2" ry="5" transform="rotate(35 127 28.5)"/>
<ellipse cx="149.5" cy="31.5" rx="6" ry="5" transform="rotate(40 149.5 31.5)"/>
</g>
<path d="M131,22 Q136,14 141,6 M147,26 Q150,20 151,12" fill="none" stroke="#eeaa78" stroke-width="1"/>

<!-- forest -->
<path d="M377,0 L634,0 L634,175 L602.5,147.5 L570,126.5 L560,130 L552.5,125 L540,113.75 L505,80 L487.5,70.75 L462.5,83.75 L455,82 L400,48.75 L392.5,45 L377.5,42.5 Z" fill="#b8e6cb"/>
<g fill="#8fcdee">
<path d="M195.75,4 L200.5,2.5 L202,8.5 L197.25,10 Z"/><path d="M217,0 L222,0 L221.5,4 L218,3 Z"/>
<path d="M228.9,13.1 L233.9,12.5 L247,33.1 L244.5,35.6 L239.5,35 L234.5,33.1 L233.9,30 L229.5,18.75 Z"/>
<path d="M275.75,12.5 L280.75,10.6 L290.75,12.5 L292.6,18.75 L287,19.4 L284.5,15.6 L277,16.9 Z"/>
<path d="M297.6,107 L301,107 Q305,113 304,119 Q312,130 315,137.5 Q321,138 321,142 Q319,145 315.5,143.5 Q313,140 312.5,137 Q306,128 301.5,121 Q297,114 297.6,107 Z"/>
<ellipse cx="127.5" cy="28.5" rx="4.2" ry="2.4" transform="rotate(30 127.5 28.5)"/>
<ellipse cx="148.75" cy="31.4" rx="3.6" ry="2.5" transform="rotate(40 148.75 31.4)"/>
<path d="M50.6,325.75 L58.75,327.6 L61.9,331.4 L50,331.4 Z"/>
<ellipse cx="322" cy="242" rx="6" ry="4.6" transform="rotate(15 322 242)"/>
<path d="M224,236 L229,236 L229,243 L224.5,243 Z"/>
<path d="M364,194.5 L369,194 L380,203 L387,214 L384,217.5 L376,209 L366.5,199.5 Z"/>
<path d="M380,96 L401.5,100 L401.5,107 L390,109 L384,103 Z"/>
<path d="M387,57 L392,57 L393,62 L388,62 Z"/><path d="M395,61 L400,62 L399.5,66 L395,65 Z"/><path d="M354,59 L363,61 L362,64 L354,63 Z"/>
<path d="M421,254 L423.4,254 L423.4,258 L421,258 Z"/><path d="M477,307.6 L479,307.6 L479,312.6 L477,312.6 Z"/>
<circle cx="256.4" cy="83.5" r="1.2"/><circle cx="279.5" cy="265.75" r="1"/><circle cx="213.25" cy="320.5" r="1"/>
</g>
<ellipse cx="229.5" cy="239.5" rx="2" ry="4" fill="#c6e9d4" transform="translate(3,0)"/>

<!-- thin gray lines -->
<g fill="none" stroke="#c9c9c9" stroke-width="1.25">
<path d="M100.6,0 V30"/>
<path d="M180,0 L186.4,92.5 L192.6,214 L195.1,242 L197.6,279.5 L200.75,317 L205.75,339.5 L209.5,349"/>
<path d="M61.25,272 L57.5,292 L51.25,317 L45,349"/>
<path d="M57.5,292 L161.25,323.25 L177,320.75 L274.5,307 L338.25,297"/>
<path d="M119,76 Q124,78 125,82 Q130,84 131,86" stroke="#cfcfcf"/>
</g>
<g fill="none" stroke="#d9d9d9" stroke-width="1.2">
<path d="M347.5,229.75 L375,217 L390,223.5 L406.25,243.5"/>
<path d="M454,283.25 L481.5,242 L510.75,206 L544.5,169.5 L560.75,147"/>
<path d="M440.25,149.5 L469,169.5"/>
<path d="M511,206 L540,213 L590,237 L615,263.5"/>
<path d="M597,242 L602,252 L614.5,264.5"/>

</g>
<g fill="none" stroke="#f3f3f3" stroke-width="2"><path d="M467,328.25 L554.5,312 L634,270.75"/><path d="M410,349 L531,317"/></g>
<!-- band street grid (white) -->
<g fill="none" stroke="#f3faf6" stroke-width="1.6" opacity="0.85">
<path d="M492,78 L560,150"/><path d="M480,84 L552,160"/><path d="M470,92 L540,165"/><path d="M512,90 L500,104"/><path d="M524,102 L508,122"/><path d="M536,114 L520,134"/><path d="M548,126 L530,150"/><path d="M562,134 L545,160"/>
<path d="M575,135 L634,190"/><path d="M566,146 L625,205"/><path d="M590,150 L575,172"/><path d="M606,164 L590,190"/><path d="M622,178 L604,208"/>
<path d="M580,180 L620,240"/><path d="M560,175 L600,232"/>
</g>
<!-- interchange bottom-left -->
<g fill="#e8f4f2" stroke="none"><path d="M12,324 L36,321 L33,349 L18,349 Z"/></g>
<g fill="none" stroke="#e9a671" stroke-width="1.1">
<path d="M10,324.5 Q17.5,322 25,320.75 Q31,320 36.25,322"/><path d="M10,324.5 Q13.75,332 16.25,342 L18.75,349"/>
<path d="M22.5,324.5 Q27,330 25,335 Q22,340 24,349"/>
<path d="M47.5,315.75 Q55,320.75 65,328.25 Q68,331 68,333.25"/>
</g>
<g fill="none" stroke="#d4d4d4" stroke-width="2.4" stroke-linecap="round">
<path d="M27.5,331.4 L41.25,334.5 L67.5,335.1"/><path d="M46.25,340.75 L65,340.1 Q68,339 68.1,336"/>
</g>
<circle cx="67.5" cy="335.1" r="1.6" fill="#fff" stroke="#d4d4d4" stroke-width="1"/>

<!-- highway -->
<path d="M147.6,-4.0 C147.5,-3.3 147.3,-2.8 146.9,0.0 C146.5,2.8 146.2,8.3 145.0,12.5 C143.8,16.7 141.6,20.8 140.0,25.0 C138.4,29.2 137.7,33.3 135.6,37.5 C133.5,41.7 130.2,45.8 127.5,50.0 C124.8,54.2 122.1,58.3 119.4,62.5 C116.7,66.7 114.1,70.8 111.2,75.0 C108.4,79.2 105.3,83.3 102.5,87.5 C99.7,91.7 96.9,96.8 94.4,100.0 C91.9,103.2 90.7,103.8 87.5,107.0 C84.3,110.2 78.7,115.3 75.0,119.5 C71.3,123.7 68.6,127.8 65.6,132.0 C62.6,136.2 59.4,140.3 56.9,144.5 C54.4,148.7 52.1,152.8 50.6,157.0 C49.1,161.2 48.7,165.3 48.1,169.5 C47.5,173.7 47.1,177.8 46.9,182.0 C46.7,186.2 46.7,190.3 46.9,194.5 C47.1,198.7 47.7,203.4 48.1,207.0 C48.5,210.6 48.9,212.8 49.5,216.0 C50.1,219.2 50.9,222.3 51.5,226.0 C52.1,229.7 53.0,233.2 53.4,238.0 C53.8,242.8 54.0,249.7 54.0,254.5 C54.0,259.3 53.6,262.8 53.1,267.0 C52.6,271.2 52.1,275.3 51.2,279.5 C50.4,283.7 49.1,287.8 48.1,292.0 C47.1,296.2 46.0,300.3 45.0,304.5 C44.0,308.7 42.9,312.8 41.9,317.0 C40.9,321.2 39.7,325.3 38.8,329.5 C37.8,333.7 37.0,338.2 36.2,342.0 C35.5,345.8 34.8,350.3 34.5,352.0" fill="none" stroke="#fdf1d8" stroke-width="10.9"/>
<path d="M147.6,-4.0 C147.5,-3.3 147.3,-2.8 146.9,0.0 C146.5,2.8 146.2,8.3 145.0,12.5 C143.8,16.7 141.6,20.8 140.0,25.0 C138.4,29.2 137.7,33.3 135.6,37.5 C133.5,41.7 130.2,45.8 127.5,50.0 C124.8,54.2 122.1,58.3 119.4,62.5 C116.7,66.7 114.1,70.8 111.2,75.0 C108.4,79.2 105.3,83.3 102.5,87.5 C99.7,91.7 96.9,96.8 94.4,100.0 C91.9,103.2 90.7,103.8 87.5,107.0 C84.3,110.2 78.7,115.3 75.0,119.5 C71.3,123.7 68.6,127.8 65.6,132.0 C62.6,136.2 59.4,140.3 56.9,144.5 C54.4,148.7 52.1,152.8 50.6,157.0 C49.1,161.2 48.7,165.3 48.1,169.5 C47.5,173.7 47.1,177.8 46.9,182.0 C46.7,186.2 46.7,190.3 46.9,194.5 C47.1,198.7 47.7,203.4 48.1,207.0 C48.5,210.6 48.9,212.8 49.5,216.0 C50.1,219.2 50.9,222.3 51.5,226.0 C52.1,229.7 53.0,233.2 53.4,238.0 C53.8,242.8 54.0,249.7 54.0,254.5 C54.0,259.3 53.6,262.8 53.1,267.0 C52.6,271.2 52.1,275.3 51.2,279.5 C50.4,283.7 49.1,287.8 48.1,292.0 C47.1,296.2 46.0,300.3 45.0,304.5 C44.0,308.7 42.9,312.8 41.9,317.0 C40.9,321.2 39.7,325.3 38.8,329.5 C37.8,333.7 37.0,338.2 36.2,342.0 C35.5,345.8 34.8,350.3 34.5,352.0" fill="none" stroke="#fdc57a" stroke-width="8.7"/>
<path d="M41,184 L51.5,192.5" stroke="#fbf8ef" stroke-width="3.4" fill="none"/>
<!-- Pulawska -->
<path d="M338.9,21.5 L338.9,60 L339.5,120 L340.2,200 L340.8,290 L342.5,330 L346,350" fill="none" stroke="#edd29a" stroke-width="6.2"/><path d="M338.9,21.5 L338.9,60 L339.5,120 L340.2,200 L340.8,290 L342.5,330 L346,350" fill="none" stroke="#fcd98e" stroke-width="5"/>
<g fill="#404040" font-size="12px" stroke="#404040" stroke-width="0.15">
<text x="31.9" y="67.25" textLength="50.6" lengthAdjust="spacing">Zamienie</text>
<text x="72.9" y="143.9" textLength="50.2" lengthAdjust="spacing">Zgorzała</text>
<text x="0.4" y="281.75" textLength="60.8" lengthAdjust="spacing">Nowa Wola</text>
<text x="200.1" y="314.5" textLength="73.8" lengthAdjust="spacing">Nowa Iwiczna</text>
<text x="312.6" y="197.6" textLength="50.4" lengthAdjust="spacing">Mysiadło</text>
<text x="540.5" y="277.6" textLength="47.5" lengthAdjust="spacing">Julianów</text>
<text x="130" y="264.75" font-size="11px" textLength="69.5" lengthAdjust="spacing" fill="#333">Nowa Zgorzała</text>
<text x="540.1" y="145.75" font-size="10.6px" textLength="90.6" lengthAdjust="spacing" fill="#333">Kierszek pod Lasem</text>
</g>
<g fill="#5e5e5e" font-size="9.8px">
<text transform="translate(428.4,73.1) rotate(30.4)" text-anchor="middle" y="3.4" textLength="42" lengthAdjust="spacing">Jagielska</text>
<text transform="translate(416.1,119.25) rotate(-7)" text-anchor="middle" y="3.3" textLength="38" lengthAdjust="spacing" fill="#6a6a6a" font-size="9.4px">Bażancia</text>
<text transform="translate(612.6,190.1) rotate(45)" text-anchor="middle" y="3.4" textLength="47" lengthAdjust="spacing">Działkowa</text>
<text transform="translate(335.7,-19.8) rotate(90)" x="0" y="0" font-size="9.3px" fill="#444" stroke="#444" stroke-width="0.2">Puławska</text>
<text transform="translate(337.5,259) rotate(90)" x="0" y="0" font-size="9.5px" fill="#8a8a8a" textLength="47" lengthAdjust="spacing">Puławska</text>
</g>

<g fill="none" stroke="#2c2c2c" stroke-width="3.5" stroke-linejoin="round" stroke-linecap="round">
<path stroke-width="3" d="M100,31.25 L100,68.25 L100,80 L97.5,87.5 L53.3,145.3 L44,138 L41,137.5 L38.5,135 L20.8,113.6 L24.5,110 L22.5,75 L19.5,53.75 L60,49.5 L68.5,48.5 L74,42.5 L88,40.5 L100,31.25"/>
<path d="M100,31 L106.25,28.1 L112.5,23.75 L118.75,20 Q122,18.6 125,19 Q128.5,19.4 131.25,20.6 L137.5,26.25 L143.75,33.1 L150,39.4 L153,42" stroke-width="5"/>
<path d="M153,42 L150,47.5 L146.25,55 L143.75,65 L140,77.5 L138.4,81.9 L138.6,86 L140,89" stroke-width="3.8"/>
<path d="M140,88.75 L137,92.5 L134,93.75" stroke-width="3"/>
<path d="M140,88.75 L148.75,87 L163.75,93.5 L180,98.75 L186,100.5 L204.5,105 L257.5,100 L294.25,98 L332.5,90 L339.5,87.5"/>
<path d="M160,93 L180,99.5" stroke-width="5" stroke-linecap="butt"/>
<path d="M339.5,87.5 L341.25,140 L342.5,226.75 L343.75,300.25 L344.25,334.75 L345.25,341"/>
<path d="M345.25,341 L365,332.25 L370,328.5 L383.75,324.25 L391.25,319.75 L427,304 L442,298.5 L447.5,289.75"/>
<path d="M447.5,289.75 L436.5,283.5 L425,270.25 L406.25,243.5 L421.75,226.75 L444.25,200.5 L473.25,173.5 L502.5,198.25 L511,206 L530.5,185.75 L533.75,181.75 L547.5,201.5 L552.5,209.25 L550.75,231 L548.25,253 L538.25,286 L535,308 L490,296 L465,289 L455.75,289 L447.5,289.75"/>
</g>
<circle cx="100" cy="31.25" r="3.7" fill="#2c2c2c"/>
<circle cx="152.5" cy="41.25" r="3.7" fill="#f4e4e4" stroke="#2c2c2c" stroke-width="3"/>
<g fill="#fff" stroke="#2c2c2c" stroke-width="2.1">
<circle cx="60" cy="49.5" r="3.7"/><circle cx="88" cy="40.5" r="3.7"/><circle cx="100" cy="68.25" r="3.7"/>
<circle cx="22.5" cy="75" r="3.7"/><circle cx="24.5" cy="110.5" r="3.7"/>
<circle cx="138.25" cy="81.25" r="3.7"/><circle cx="140" cy="88.75" r="3.7"/>
<circle cx="186.25" cy="98.25" r="3.7"/><circle cx="180.5" cy="103.25" r="3.7"/><circle cx="204.5" cy="105" r="3.7"/>
<circle cx="257.5" cy="100" r="3.7"/><circle cx="294.25" cy="98" r="3.7"/><circle cx="332.5" cy="90" r="3.7"/>
<circle cx="341.25" cy="140" r="3.7"/><circle cx="342.5" cy="226.75" r="3.7"/><circle cx="343.75" cy="300.25" r="3.7"/><circle cx="344.25" cy="334.75" r="3.7"/>
<circle cx="383.75" cy="324.25" r="3.7"/><circle cx="427" cy="304" r="3.7"/><circle cx="425" cy="270.25" r="3.7"/>
<circle cx="421.75" cy="226.75" r="3.7"/><circle cx="444.25" cy="200.5" r="3.7"/><circle cx="473.25" cy="173.5" r="3.7"/>
<circle cx="502.5" cy="198.25" r="3.7"/><circle cx="530.5" cy="185.75" r="3.7"/><circle cx="547.5" cy="201.5" r="3.7"/>
<circle cx="548.25" cy="253" r="3.7"/><circle cx="538.25" cy="286" r="3.7"/>
</g>
<circle cx="455.75" cy="289" r="3.7" fill="#f4f4f4" stroke="#989898" stroke-width="2"/>
<!-- arrows -->
<g fill="none" stroke="#5c5c5c" stroke-width="1.3" stroke-linecap="round" stroke-linejoin="round">
</g>
<g fill="none" stroke="#5c5c5c" stroke-width="1.3" stroke-linecap="round" stroke-linejoin="round">
<path d="M-4,0 L4,0 M0.8,-3 L4,0 L0.8,3" transform="translate(133.5,11.5) rotate(200)" stroke="#3a3a3a"/>
<path d="M-4,0 L4,0 M0.8,-3 L4,0 L0.8,3" transform="translate(106.5,43.5) rotate(-15)"/>
<path d="M-4,0 L4,0 M0.8,-3 L4,0 L0.8,3" transform="translate(127.5,96) rotate(75)"/>
<path d="M-4,0 L4,0 M0.8,-3 L4,0 L0.8,3" transform="translate(207.5,94) rotate(188)"/>
<path d="M-4,0 L4,0 M0.8,-3 L4,0 L0.8,3" transform="translate(55,119) rotate(142)"/>
<path d="M-4,0 L4,0 M0.8,-3 L4,0 L0.8,3" transform="translate(356.5,323.5) rotate(160)"/>
<path d="M-4,0 L4,0 M0.8,-3 L4,0 L0.8,3" transform="translate(403.75,257) rotate(55)"/>
<path d="M-4,0 L4,0 M0.8,-3 L4,0 L0.8,3" transform="translate(459,300.5) rotate(5)"/>
<path d="M-4,0 L4,0 M0.8,-3 L4,0 L0.8,3" transform="translate(511.5,192.5) rotate(225)"/>
<path d="M-4,0 L4,0 M0.8,-3 L4,0 L0.8,3" transform="translate(560.5,232) rotate(-90)"/>
</g>

</g>
</svg>

</div></body></html>
